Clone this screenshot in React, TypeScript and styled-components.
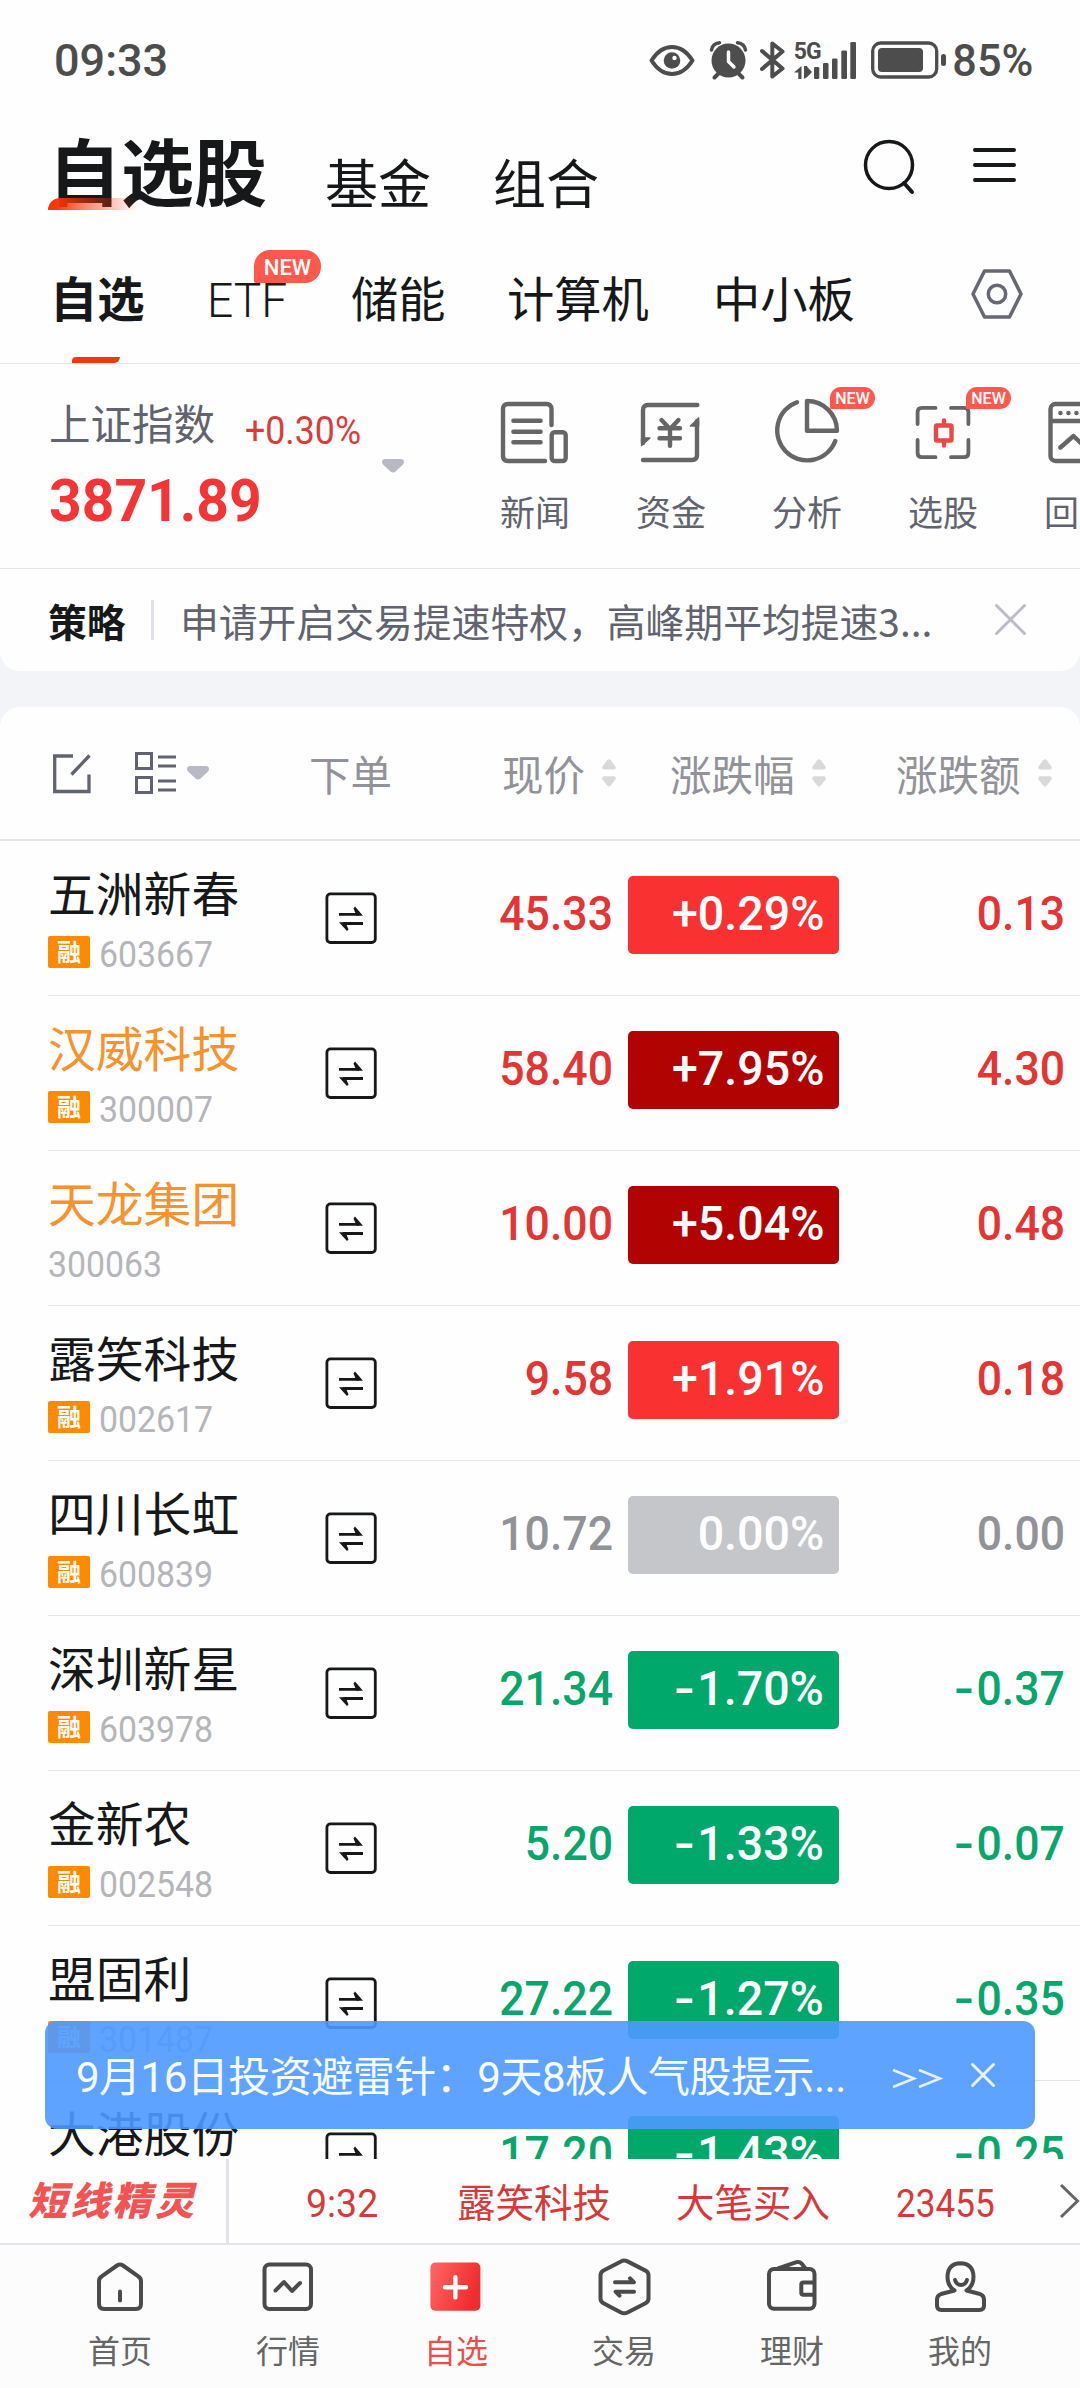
import React from "react";
import styled, { createGlobalStyle } from "styled-components";

const cjk = `"Noto Sans CJK SC", sans-serif`;
const latin = `Roboto, "Noto Sans CJK SC", sans-serif`;

const palette = {
  ink: "#17181a",
  slate: "#61636f",
  mute: "#929299",
  line: "#e5e5e5",
  up: "#e43535",
  down: "#08a66c",
  flat: "#929299",
};

const GlobalStyle = createGlobalStyle`
  *, *::before, *::after { box-sizing: border-box; }
  body { margin: 0; background: #fefefe; font-family: ${cjk}; color: ${palette.ink}; }
  svg { display: block; flex: none; overflow: visible; }
`;

const Screen = styled.div`
  width: 1080px;
  height: 2388px;
  overflow: hidden;
  display: flex;
  flex-direction: column;
  background: #f3f4f8;
  white-space: nowrap;
`;

/* Numbers are set slightly condensed, anchored to one edge of their cell. */
const Num = styled.span<{
  $size: number;
  $color?: string;
  $weight?: number;
  $squeeze?: number;
  $from?: "left" | "right";
}>`
  display: inline-block;
  font-family: ${latin};
  font-size: ${(p) => p.$size}px;
  line-height: 1;
  font-weight: ${(p) => p.$weight ?? 400};
  color: ${(p) => p.$color ?? "inherit"};
  transform: scaleX(${(p) => p.$squeeze ?? 1});
  transform-origin: ${(p) => p.$from ?? "left"} center;
`;

const Minus = styled.span`
  display: inline-block;
  padding-right: 2px;
  transform: scaleX(1.3);
  transform-origin: right center;
`;

/* ---------- status bar ---------- */

const StatusBar = styled.div`
  height: 110px;
  padding: 10px 47px 0 54px;
  display: flex;
  align-items: center;
  color: #4d4d4d;
  background: #fefefe;
`;

const StatusIcons = styled.div`
  margin-left: auto;
  display: flex;
  align-items: center;
`;

const StatusGlyph = styled.svg<{ $gap: number }>`
  margin-right: ${(p) => p.$gap}px;
`;

const Signal = styled.div`
  width: 63px;
  height: 40px;
  margin-right: 14px;
  display: grid;
  grid-template-columns: 20px 1fr;
`;

const SignalText = styled.div`
  font: 700 23px/17px ${latin};
  letter-spacing: -1px;
  display: flex;
  flex-direction: column;
  gap: 6px;
  padding-top: 3px;
`;

/* ---------- title and tabs ---------- */

const TopPanel = styled.header`
  background: #fefefe;
  border-radius: 0 0 20px 20px;
  height: 561px;
`;

const TitleRow = styled.div`
  height: 125px;
  padding: 0 64px 0 48px;
  display: flex;
  align-items: flex-start;
`;

const MainTitle = styled.h1`
  margin: 8px 0 0;
  position: relative;
  font-size: 73px;
  line-height: 100px;
  font-weight: 700;
  width: 277px;
`;

const TitleAccent = styled.span`
  position: absolute;
  left: 0;
  bottom: 8px;
  width: 90px;
  height: 12px;
  border-radius: 14px 0 0 0;
  background: linear-gradient(90deg, #f8360a 8%, rgba(248, 54, 10, 0.6) 40%, rgba(248, 54, 10, 0));
`;

const SubTitle = styled.span`
  width: 168px;
  margin-top: 36px;
  font-size: 53px;
  line-height: 70px;
`;

const TitleTools = styled.div`
  display: flex;
  align-items: center;
  margin: 27px 0 0 auto;
  gap: 57px;
`;

const TabRow = styled.nav`
  height: 129px;
  padding: 29px 0 0 50px;
  display: flex;
  border-bottom: 1px solid ${palette.line};
`;

const Tab = styled.div<{ $width: number; $active?: boolean }>`
  position: relative;
  width: ${(p) => p.$width}px;
  height: 99px;
  font-size: 47.3px;
  line-height: 66px;
  font-weight: ${(p) => (p.$active ? 700 : 400)};
`;

const TabMark = styled.span`
  position: absolute;
  left: 22px;
  bottom: 0;
  width: 48px;
  height: 6px;
  border-radius: 4px 0 6px 0;
  background: #f0380f;
`;

const NewTag = styled.span<{ $big?: boolean; $left: number; $top: number }>`
  position: absolute;
  left: ${(p) => p.$left}px;
  top: ${(p) => p.$top}px;
  width: ${(p) => (p.$big ? 67 : 45)}px;
  height: ${(p) => (p.$big ? 33 : 22)}px;
  border-radius: ${(p) => (p.$big ? "16px 16px 16px 2px" : "11px 11px 11px 1px")};
  background: #ff594d;
  color: #fff;
  text-align: center;
  font: 500 ${(p) => (p.$big ? 22 : 16)}px/${(p) => (p.$big ? 35 : 23)}px ${latin};
`;

/* ---------- index and quick actions ---------- */

const IndexRow = styled.section`
  height: 205px;
  border-bottom: 1px solid ${palette.line};
  display: flex;
  overflow: hidden;
`;

const IndexBox = styled.div`
  width: 382px;
  flex: none;
  padding: 28px 0 0 49px;
  display: flex;
  flex-direction: column;
`;

const IndexHead = styled.div`
  display: flex;
  align-items: center;
  height: 60px;
  color: ${palette.slate};
  font-size: 41.5px;
`;

const IndexName = styled.span`
  width: 196px;
  line-height: 60px;
`;

const IndexChange = styled.span`
  line-height: 1;
  padding-top: 11px;
`;

const IndexValue = styled.div`
  margin-top: 19px;
`;

const Caret = styled.svg<{ $top?: number }>`
  margin-top: ${(p) => p.$top ?? 0}px;
`;

const Actions = styled.div`
  display: flex;
  margin-left: 63px;
`;

const Action = styled.div`
  position: relative;
  width: 136px;
  flex: none;
  padding-top: 33px;
  display: flex;
  flex-direction: column;
  align-items: center;
  color: ${palette.slate};
  font-size: 35px;
  line-height: 50px;
`;

const ActionLabel = styled.span`
  margin-top: 21px;
`;

const Notice = styled.section`
  height: 102px;
  padding: 0 53px 1px 48px;
  display: flex;
  align-items: center;
  font-size: 38.8px;
  line-height: 56px;
  color: ${palette.slate};
`;

const NoticeTag = styled.strong`
  width: 103px;
  font-weight: 700;
  color: ${palette.ink};
`;

const NoticeRule = styled.span`
  width: 3px;
  height: 40px;
  margin-right: 26px;
  background: #e0e1ec;
`;

const NoticeText = styled.span`
  width: 815px;
`;

/* ---------- watch list ---------- */

const ListPanel = styled.main`
  margin-top: 36px;
  background: #fefefe;
  border-radius: 20px 20px 0 0;
  height: 1452px;
  flex: none;
`;

const ListHead = styled.div`
  height: 134px;
  padding-left: 53px;
  display: flex;
  align-items: center;
  border-bottom: 2px solid ${palette.line};
  color: ${palette.mute};
  font-size: 41.5px;
  line-height: 60px;
`;

const HeadCell = styled.div<{ $width: number }>`
  width: ${(p) => p.$width}px;
  flex: none;
  display: flex;
  align-items: center;
  gap: 17px;
`;

const HeadTools = styled.div`
  width: 256px;
  display: flex;
  align-items: center;
`;

const ListWindow = styled.div`
  height: 1318px;
  overflow: hidden;
`;

const Row = styled.div`
  height: 155px;
  margin-left: 48px;
  border-bottom: 1px solid ${palette.line};
  display: grid;
  grid-template-columns: 277px 52px 236px 15px 211px 226px;
  align-items: start;
`;

const NameCell = styled.div`
  padding-top: 17px;
`;

const StockName = styled.div<{ $hot?: boolean }>`
  font-size: 47.8px;
  line-height: 68px;
  color: ${(p) => (p.$hot ? "#f7922c" : palette.ink)};
`;

const CodeLine = styled.div`
  display: flex;
  align-items: flex-start;
  height: 32px;
  margin-top: 10px;
`;

const CodeText = styled.span`
  padding-top: 1px;
  line-height: 1;
`;

const MarginTag = styled.span`
  width: 42px;
  height: 32px;
  margin-right: 9px;
  border-radius: 2px;
  background: #ff8a00;
  color: #fff;
  font-size: 24px;
  font-weight: 700;
  line-height: 30px;
  text-align: center;
`;

const TradeIcon = styled.svg`
  margin-top: 51px;
`;

const Figure = styled.div`
  padding-top: 48px;
  text-align: right;
`;

const Pill = styled.div<{ $bg: string }>`
  height: 78px;
  margin-top: 35px;
  padding: 13px 15px 0 0;
  border-radius: 5px;
  background: ${(p) => p.$bg};
  color: #fff;
  text-align: right;
`;

/* ---------- floating banner ---------- */

const Banner = styled.div`
  position: absolute;
  left: 45px;
  top: 2021px;
  width: 990px;
  height: 108px;
  padding: 4px 40px 0 31px;
  border-radius: 12px;
  background: rgba(76, 153, 255, 0.9);
  color: #f7faff;
  display: flex;
  align-items: center;
  font-size: 42px;
  line-height: 60px;
`;

const BannerText = styled.span`
  width: 816px;
  padding-top: 2px;
  font-family: ${latin};
  letter-spacing: -0.5px;
`;

const BannerClose = styled.span`
  margin: 0 0 5px 29px;
`;

/* ---------- ticker and tab bar ---------- */

const Ticker = styled.section`
  height: 86px;
  flex: none;
  background: #fefefe;
  border-bottom: 2px solid #e3e4ea;
  display: flex;
  align-items: center;
  color: #d93838;
  font-size: 38.5px;
  line-height: 56px;
`;

const TickerBrand = styled.div`
  width: 231px;
  height: 84px;
  padding: 11px 0 0 28px;
  border-right: 3px solid #e3e4ea;
  font-size: 39px;
  font-weight: 900;
  font-style: italic;
  letter-spacing: 3.3px;
  color: #f25353;
`;

const TickerCell = styled.span<{ $width: number; $pad?: number }>`
  width: ${(p) => p.$width}px;
  padding: 0 0 2px ${(p) => p.$pad ?? 0}px;
  flex: none;
`;

const BottomBar = styled.footer`
  height: 143px;
  flex: none;
  padding: 11px 36px 0;
  background: #fcfcfc;
  display: grid;
  grid-template-columns: repeat(6, 1fr);
`;

const BottomItem = styled.div<{ $active?: boolean }>`
  display: flex;
  flex-direction: column;
  align-items: center;
  color: ${(p) => (p.$active ? "#ea4f4a" : "#666")};
  font-size: 32px;
  line-height: 46px;
`;

const BottomLabel = styled.span`
  margin-top: 10px;
`;

/* ---------- drawings ---------- */

const CaretDown = ({ top }: { top?: number }) => (
  <Caret $top={top} width="22" height="14" viewBox="0 0 22 14" fill="#b9b9c6">
    <path d="M3 0H19Q22 .4 22 3Q22 4.6 20.5 6L13.5 12.6Q11 14.6 8.5 12.6L1.5 6Q0 4.6 0 3Q0 .4 3 0Z" />
  </Caret>
);

const SortMark = () => (
  <svg width="14" height="28" viewBox="0 0 14 28" fill="#d9d9d9">
    <path d="M2 10.6Q-.5 10 .5 7.4L5.2 1.2Q7-.8 8.8 1.2L13.5 7.4Q14.5 10 12 10.6Z" />
    <path d="M2 17.2Q-.5 17.8 .5 20.4L5.2 26.6Q7 28.6 8.8 26.6L13.5 20.4Q14.5 17.8 12 17.2Z" />
  </svg>
);

const Cross = ({ size, color }: { size: number; color: string }) => (
  <svg width={size} height={size} viewBox={`0 0 ${size} ${size}`} stroke={color} strokeWidth="3" strokeLinecap="round">
    <path d={`M1.5 1.5L${size - 1.5} ${size - 1.5}M${size - 1.5} 1.5L1.5 ${size - 1.5}`} />
  </svg>
);

const ActionGlyph = ({ children }: { children: React.ReactNode }) => (
  <svg width="70" height="68" viewBox="0 0 70 68" fill="none" stroke="#666" strokeWidth="4.4" strokeLinecap="round" strokeLinejoin="round">
    {children}
  </svg>
);

const NewsGlyph = () => (
  <ActionGlyph>
    <path d="M51.5 28V12Q51.5 7 46.5 7H8Q3 7 3 12V59Q3 64 8 64H45" />
    <path d="M13.4 23.7H40.6M13.4 34.7H40.6M13.4 45.3H40.6" />
    <rect x="51.7" y="35.3" width="14" height="28.7" rx="3" />
  </ActionGlyph>
);

const MoneyGlyph = () => (
  <ActionGlyph>
    <path d="M61.3 8H12Q7 8 7 13V46M7 63H56Q61 63 61 58V24" />
    <path d="M5.6 48.5V41H14Z M62.6 21V29H54.5Z" fill="#666" strokeWidth="1.5" />
    <path d="M25.5 23L34 32L42.5 23M23.5 31.3H44M23.5 41.3H44M34 32V48.7" />
  </ActionGlyph>
);

const PieGlyph = () => (
  <ActionGlyph>
    <path d="M25 5.2A30 30 0 1 0 63.3 44" />
    <path d="M35 4V33.7H65A30 30 0 0 0 35 4Z" />
  </ActionGlyph>
);

const PickGlyph = () => (
  <ActionGlyph>
    <path strokeWidth="3.8" d="M9.6 27V15Q9.6 10.9 14 10.9H27.5M43 10.9H56Q60.4 10.9 60.4 15V27M60.4 43V56Q60.4 60.2 56 60.2H43M27.5 60.2H14Q9.6 60.2 9.6 56V43" />
    <path stroke="#ee4747" d="M36 23.5V28M36 44V48.5M29 28.5H42.5Q43.5 28.5 43.5 29.5V42.5Q43.5 43.5 42.5 43.5H29Q28 43.5 28 42.5V29.5Q28 28.5 29 28.5Z" />
  </ActionGlyph>
);

const ReplayGlyph = () => (
  <ActionGlyph>
    <rect x="6.5" y="7" width="57" height="57" rx="5" />
    <path d="M7 24H63M16.4 16H16.5M24.4 16H24.5M32.4 16H32.5M16.4 50.5L29.5 39L41 50L54 38" />
  </ActionGlyph>
);

const TradeGlyph = () => (
  <TradeIcon width="52" height="52" viewBox="0 0 52 52" fill="none" stroke={palette.ink} strokeWidth="2.8">
    <rect x="1.9" y="1.9" width="48.4" height="48.6" rx="3.5" />
    <path d="M14 22.3H34M38 31.5H18" />
    <path d="M30 14.5L38 23.7H31.5L28.5 16.5ZM22 39L14 30.2H20.5L23.5 37.5Z" fill={palette.ink} stroke="none" />
  </TradeIcon>
);

const NavGlyph = ({ children }: { children: React.ReactNode }) => (
  <svg width="60" height="60" viewBox="0 0 60 60" fill="none" stroke="#4b4b4b" strokeWidth="4" strokeLinecap="round" strokeLinejoin="round">
    {children}
  </svg>
);

const navItems = [
  {
    label: "首页",
    glyph: (
      <NavGlyph>
        <path d="M9 25Q9 22 12 20.2L27 9.5Q30 7.6 33 9.5L48 20.2Q51 22 51 25V48Q51 53 46 53H14Q9 53 9 48Z" />
        <path d="M30 35.5V44.5" />
      </NavGlyph>
    ),
  },
  {
    label: "行情",
    glyph: (
      <NavGlyph>
        <rect x="6.5" y="8.5" width="46.5" height="44.5" rx="5" />
        <path d="M17.5 34.5L26 26L34 35L42 27" />
      </NavGlyph>
    ),
  },
  {
    label: "自选",
    active: true,
    glyph: (
      <NavGlyph>
        <defs>
          <linearGradient id="plusFill" x1="0" y1="0" x2="1" y2="0.35">
            <stop offset="0" stopColor="#ff6767" />
            <stop offset="1" stopColor="#f02c2c" />
          </linearGradient>
        </defs>
        <rect x="4.4" y="6.5" width="50" height="48.3" rx="5" fill="url(#plusFill)" stroke="none" />
        <path d="M19 31.3H40M29.4 21.2V41.4" stroke="#fff" strokeWidth="4.4" />
      </NavGlyph>
    ),
  },
  {
    label: "交易",
    glyph: (
      <NavGlyph>
        <path d="M27 5.4Q30 3.6 33.5 5.4L51.5 14.6Q54.5 16.3 54.5 19.5V42.5Q54.5 45.6 51.5 47.3L33.5 56.5Q30.2 58.2 27 56.5L9.5 47.3Q6.5 45.6 6.5 42.5V19.5Q6.5 16.3 9.5 14.6Z" />
        <path d="M21 26.3H40L36 22.3M40 35.7H21.5L25.5 39.7" />
      </NavGlyph>
    ),
  },
  {
    label: "理财",
    glyph: (
      <NavGlyph>
        <rect x="7" y="13" width="45.5" height="39.7" rx="5" />
        <path d="M16 12.5L34.5 6.2Q37.5 5.2 39.5 7.5L43.5 12.5M52 26.5H41.5Q39.3 26.5 39.3 28.5V36.7Q39.3 38.7 41.5 38.7H52" />
      </NavGlyph>
    ),
  },
  {
    label: "我的",
    glyph: (
      <NavGlyph>
        <path d="M24.5 34.5Q17.5 30 17.5 20.5Q18 7.5 30.5 7.3Q43 7.5 43.5 20.5Q43.5 30 36.5 34.5L50 38Q54 39.5 54 43.5V49.5Q54 54 49.5 54H11.5Q7 54 7 49.5V43.5Q7 39.5 11 38L24.5 34.5" />
        <path d="M25 24Q26.5 29 31 29Q35.5 29 37 24" />
      </NavGlyph>
    ),
  },
];

/* ---------- data ---------- */

type Stock = { name: string; code?: string; price: string; pct: string; amt: string; hot?: boolean; margin?: boolean };

const stocks: Stock[] = [
  { name: "五洲新春", code: "603667", price: "45.33", pct: "+0.29%", amt: "0.13", margin: true },
  { name: "汉威科技", code: "300007", price: "58.40", pct: "+7.95%", amt: "4.30", margin: true, hot: true },
  { name: "天龙集团", code: "300063", price: "10.00", pct: "+5.04%", amt: "0.48", hot: true },
  { name: "露笑科技", code: "002617", price: "9.58", pct: "+1.91%", amt: "0.18", margin: true },
  { name: "四川长虹", code: "600839", price: "10.72", pct: "0.00%", amt: "0.00", margin: true },
  { name: "深圳新星", code: "603978", price: "21.34", pct: "-1.70%", amt: "-0.37", margin: true },
  { name: "金新农", code: "002548", price: "5.20", pct: "-1.33%", amt: "-0.07", margin: true },
  { name: "盟固利", code: "301487", price: "27.22", pct: "-1.27%", amt: "-0.35", margin: true },
  { name: "大港股份", price: "17.20", pct: "-1.43%", amt: "-0.25" },
];

const tone = (pct: string) => {
  const v = parseFloat(pct);
  if (v > 0) return { text: palette.up, pill: v >= 5 ? "#b20303" : "#fa3131" };
  if (v < 0) return { text: palette.down, pill: "#00a96b" };
  return { text: palette.flat, pill: "#c5c6ca" };
};

const Signed = ({ value }: { value: string }) =>
  value.startsWith("-") ? (
    <>
      <Minus>-</Minus>
      {value.slice(1)}
    </>
  ) : (
    <>{value}</>
  );

const StockRow = ({ s }: { s: Stock }) => {
  const t = tone(s.pct);
  return (
    <Row>
      <NameCell>
        <StockName $hot={s.hot}>{s.name}</StockName>
        {s.code && (
          <CodeLine>
            {s.margin && <MarginTag>融</MarginTag>}
            <CodeText>
              <Num $size={36} $color="#b5b6ba" $squeeze={0.94}>{s.code}</Num>
            </CodeText>
          </CodeLine>
        )}
      </NameCell>
      <TradeGlyph />
      <Figure>
        <Num $size={49} $weight={500} $color={t.text} $squeeze={0.91} $from="right">{s.price}</Num>
      </Figure>
      <span />
      <Pill $bg={t.pill}>
        <Num $size={49} $weight={500} $squeeze={0.95} $from="right"><Signed value={s.pct} /></Num>
      </Pill>
      <Figure>
        <Num $size={49} $weight={500} $color={t.text} $squeeze={0.91} $from="right"><Signed value={s.amt} /></Num>
      </Figure>
    </Row>
  );
};

export default function App() {
  return (
    <Screen>
      <GlobalStyle />
      <StatusBar>
        <Num $size={45} $weight={500}>09:33</Num>
        <StatusIcons>
          <StatusGlyph $gap={15} width="46" height="40" viewBox="0 0 46 40" fill="none" stroke="currentColor" strokeWidth="4">
            <path d="M2.5 20.5Q11 7 23 7Q35 7 43.5 20.5Q35 34 23 34Q11 34 2.5 20.5Z" strokeLinejoin="round" />
            <circle cx="23" cy="20.5" r="8.3" fill="currentColor" stroke="none" />
            <circle cx="25.5" cy="18" r="2.2" fill="#fefefe" stroke="none" />
          </StatusGlyph>
          <StatusGlyph $gap={13} width="37" height="40" viewBox="0 0 37 40" fill="none" stroke="currentColor" strokeLinecap="round">
            <circle cx="18.5" cy="20.5" r="17" fill="currentColor" stroke="none" />
            <path d="M1.5 10Q2.5 3.5 9.5 2.7M27.5 2.7Q34.5 3.5 35.5 10" strokeWidth="3.5" />
            <path d="M8 34L4.5 37.5M29 34L32.5 37.5" strokeWidth="4" />
            <path d="M18.5 12V21.5L24 27" stroke="#fefefe" strokeWidth="3.5" />
          </StatusGlyph>
          <StatusGlyph $gap={9} width="25" height="40" viewBox="0 0 25 40" fill="none" stroke="currentColor" strokeWidth="4" strokeLinecap="round" strokeLinejoin="round">
            <path d="M2 11L22.5 28.5L12.3 36.5V3.5L22.5 11.5L2 29" />
          </StatusGlyph>
          <Signal>
            <SignalText>
              5G
              <svg width="18" height="13" viewBox="0 0 18 13" fill="currentColor">
                <path d="M7.5 0V13H4.3V6.5H0ZM10 13V0H13.2V1L18 6L13.2 11Z" />
              </svg>
            </SignalText>
            <svg width="43" height="40" viewBox="0 0 43 40" fill="currentColor">
              <rect x="0" y="27" width="5.3" height="12" rx="1.3" />
              <rect x="9" y="23" width="5.5" height="16" rx="1.3" />
              <rect x="18" y="18.5" width="5.5" height="20.5" rx="1.3" />
              <rect x="27.3" y="10.5" width="5.7" height="28.5" rx="1.3" />
              <rect x="36.3" y="2" width="5.7" height="37" rx="1.3" />
            </svg>
          </Signal>
          <StatusGlyph $gap={2} width="76" height="40" viewBox="0 0 76 40" fill="none" stroke="currentColor" strokeWidth="3.3">
            <rect x="1.7" y="3" width="64" height="34" rx="8" />
            <rect x="7" y="8" width="45" height="24" rx="4" fill="currentColor" stroke="none" />
            <rect x="70" y="14" width="5" height="12" rx="2.5" fill="currentColor" stroke="none" />
          </StatusGlyph>
          <Num $size={45} $weight={500} $squeeze={0.96} $from="right">85%</Num>
        </StatusIcons>
      </StatusBar>

      <TopPanel>
        <TitleRow>
          <MainTitle>
            自选股
            <TitleAccent />
          </MainTitle>
          <SubTitle>基金</SubTitle>
          <SubTitle>组合</SubTitle>
          <TitleTools>
            <svg width="52" height="56" viewBox="0 0 52 56" fill="none" stroke={palette.ink} strokeWidth="3.5" strokeLinecap="round">
              <circle cx="25" cy="28" r="23.5" />
              <path d="M40 46L48 55" strokeWidth="4" />
            </svg>
            <svg width="43" height="36" viewBox="0 0 43 36" stroke={palette.ink} strokeWidth="4" strokeLinecap="round">
              <path d="M2 3H41M2 18H41M2 33H41" />
            </svg>
          </TitleTools>
        </TitleRow>

        <TabRow>
          <Tab $width={157} $active>
            自选
            <TabMark />
          </Tab>
          <Tab $width={144}>
            <Num $size={48} $weight={300} $squeeze={0.96}>ETF</Num>
            <NewTag $big $left={47} $top={-14}>NEW</NewTag>
          </Tab>
          <Tab $width={156}>储能</Tab>
          <Tab $width={206}>计算机</Tab>
          <Tab $width={258}>中小板</Tab>
          <svg width="52" height="58" viewBox="0 0 52 58" fill="none" stroke="#666874" strokeWidth="3.5" strokeLinejoin="round">
            <path d="M13.500 7H38.500L50 30L38.500 53H13.500L2 30Z" />
            <circle cx="26" cy="30" r="8.700" />
          </svg>
        </TabRow>

        <IndexRow>
          <IndexBox>
            <IndexHead>
              <IndexName>上证指数</IndexName>
              <IndexChange>
                <Num $size={38} $color="#dc3b3b" $squeeze={0.94}>+0.30%</Num>
              </IndexChange>
            </IndexHead>
            <IndexValue>
              <Num $size={60} $weight={700} $color="#f53535" $squeeze={0.95}>3871.89</Num>
            </IndexValue>
          </IndexBox>
          <CaretDown top={95} />
          <Actions>
            <Action><NewsGlyph /><ActionLabel>新闻</ActionLabel></Action>
            <Action><MoneyGlyph /><ActionLabel>资金</ActionLabel></Action>
            <Action><PieGlyph /><ActionLabel>分析</ActionLabel><NewTag $left={91} $top={23}>NEW</NewTag></Action>
            <Action><PickGlyph /><ActionLabel>选股</ActionLabel><NewTag $left={91} $top={23}>NEW</NewTag></Action>
            <Action><ReplayGlyph /><ActionLabel>回放</ActionLabel></Action>
          </Actions>
        </IndexRow>

        <Notice>
          <NoticeTag>策略</NoticeTag>
          <NoticeRule />
          <NoticeText>申请开启交易提速特权，高峰期平均提速3...</NoticeText>
          <Cross size={31} color="#bcbcc8" />
        </Notice>
      </TopPanel>

      <ListPanel>
        <ListHead>
          <HeadTools>
            <svg width="38" height="41" viewBox="0 0 38 41" fill="none" stroke="#61636f" strokeWidth="3.3">
              <path d="M20 3H1.7V38.5H36V21.5M36.5 2.5L18.5 21.5" />
            </svg>
            <svg width="96" height="42" viewBox="0 0 96 42" fill="none" stroke="#61636f" strokeWidth="3">
              <path d="M45.5 1.5H60.5V16.5H45.5ZM45.5 25.5H60.5V40.5H45.5ZM67 5H85M67 14H85M67 29H85M67 38H85" />
            </svg>
            <CaretDown />
          </HeadTools>
          <HeadCell $width={193}>下单</HeadCell>
          <HeadCell $width={168}>现价<SortMark /></HeadCell>
          <HeadCell $width={226}>涨跌幅<SortMark /></HeadCell>
          <HeadCell $width={180}>涨跌额<SortMark /></HeadCell>
        </ListHead>
        <ListWindow>
          {stocks.map((s) => (
            <StockRow key={s.name} s={s} />
          ))}
        </ListWindow>
      </ListPanel>

      <Banner>
        <BannerText>9月16日投资避雷针：9天8板人气股提示...</BannerText>
        <svg width="50" height="24" viewBox="0 0 50 24" fill="none" stroke="#e4f0ff" strokeWidth="2.6">
          <path d="M1 5L22 13.5L1 22M27 5L48 13.5L27 22" />
        </svg>
        <BannerClose>
          <Cross size={24} color="#e9f3ff" />
        </BannerClose>
      </Banner>

      <Ticker>
        <TickerBrand>短线精灵</TickerBrand>
        <TickerCell $width={228} $pad={77}><Num $size={39} $squeeze={0.96}>9:32</Num></TickerCell>
        <TickerCell $width={219}>露笑科技</TickerCell>
        <TickerCell $width={220}>大笔买入</TickerCell>
        <TickerCell $width={164}><Num $size={39} $squeeze={0.9}>23455</Num></TickerCell>
        <svg width="20" height="36" viewBox="0 0 20 36" fill="none" stroke="#666" strokeWidth="3">
          <path d="M1 2L17.5 18L1 34" />
        </svg>
      </Ticker>

      <BottomBar>
        {navItems.map((n) => (
          <BottomItem key={n.label} $active={n.active}>
            {n.glyph}
            <BottomLabel>{n.label}</BottomLabel>
          </BottomItem>
        ))}
      </BottomBar>
    </Screen>
  );
}
